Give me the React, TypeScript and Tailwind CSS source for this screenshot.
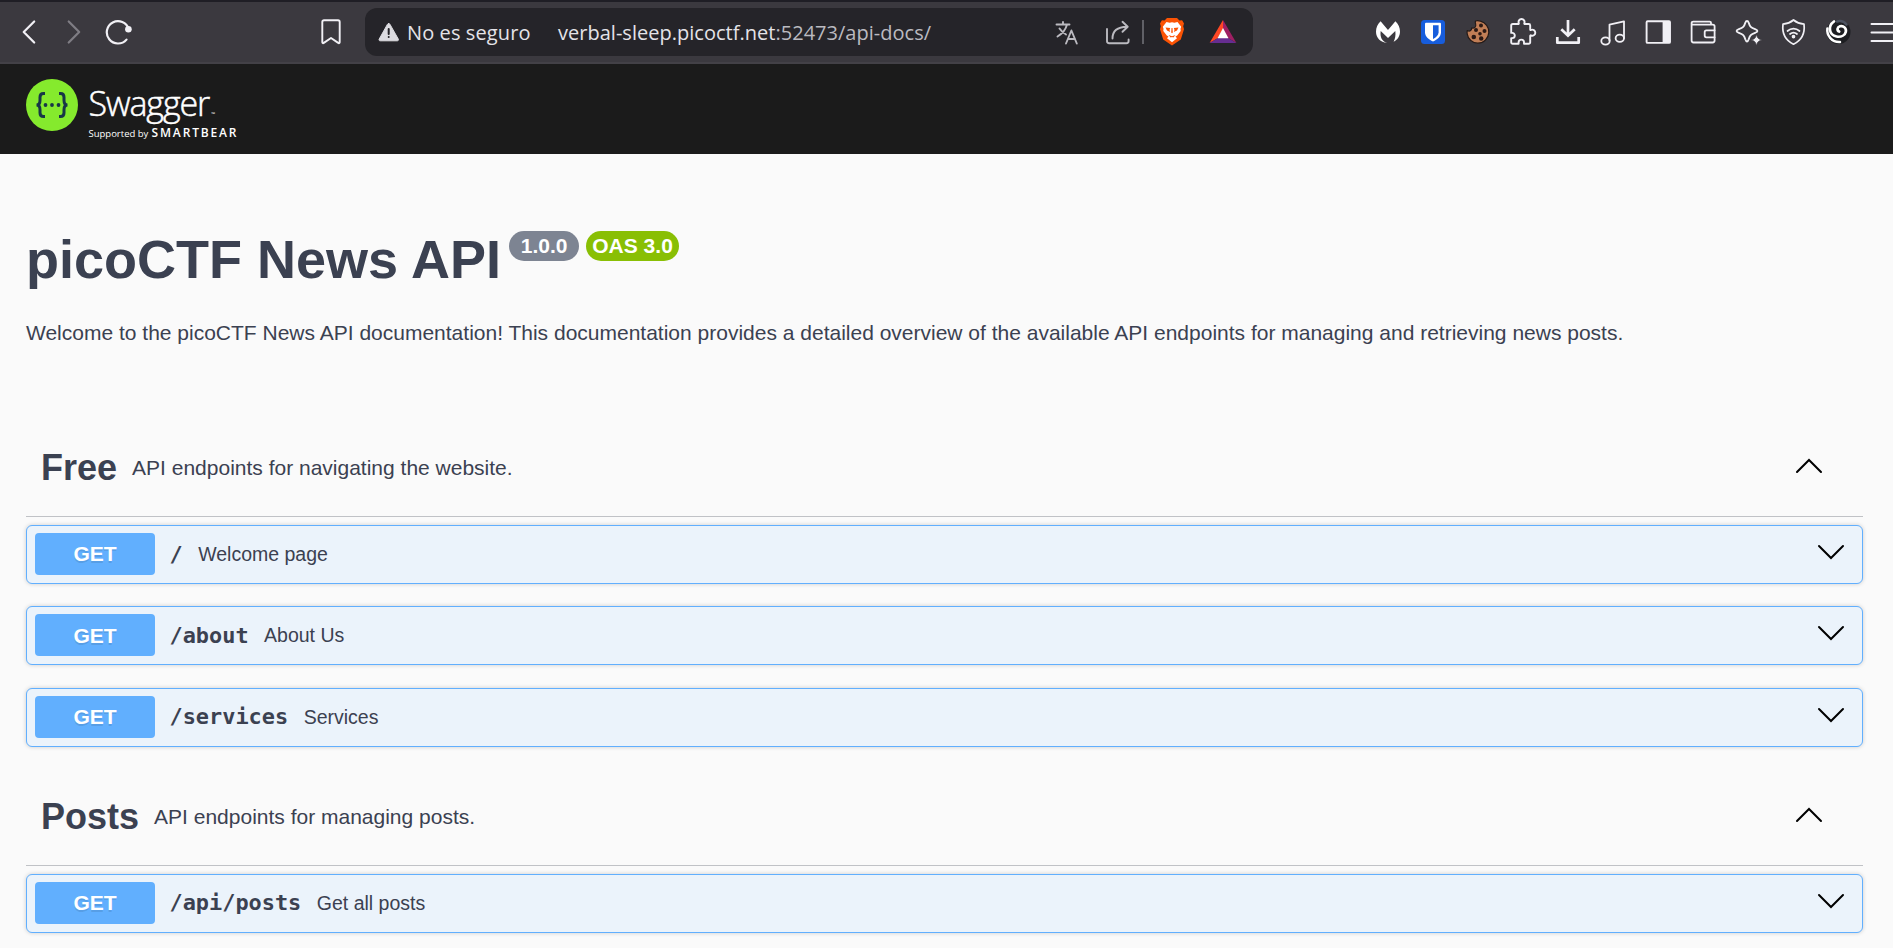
import type { ReactNode } from "react";

type Operation = { path: string; summary: string };
type Section = { name: string; description: string; operations: Operation[] };

const sections: Section[] = [
  {
    name: "Free",
    description: "API endpoints for navigating the website.",
    operations: [
      { path: "/", summary: "Welcome page" },
      { path: "/about", summary: "About Us" },
      { path: "/services", summary: "Services" },
    ],
  },
  {
    name: "Posts",
    description: "API endpoints for managing posts.",
    operations: [{ path: "/api/posts", summary: "Get all posts" }],
  },
];

function Icon({ children, className = "" }: { children: ReactNode; className?: string }) {
  return (
    <svg
      viewBox="0 0 28 28"
      className={`h-7 w-7 shrink-0 ${className}`}
      fill="none"
      stroke="currentColor"
      strokeWidth="1.9"
      strokeLinecap="round"
      strokeLinejoin="round"
    >
      {children}
    </svg>
  );
}

const extensions: { id: string; art: ReactNode }[] = [
  {
    id: "malwarebytes",
    art: (
      <path
        stroke="none"
        fill="#fff"
        d="M6.6 3.2 14 12l7.4-8.8C24.4 6 26 9.6 26 13.6c0 4.600-2.500 8.400-6.400 10.200 1.500-2.800 2.300-6.500 1.700-10.800L14 20l-7.300-7c-.9 6 1.300 10.400 6.300 12C6.500 24.500 2 19.800 2 13.800 2 9.600 3.600 6 6.600 3.200Z"
      />
    ),
  },
  {
    id: "bitwarden",
    art: (
      <g stroke="none">
        <rect x="2" y="2" width="24" height="24" rx="3.500" fill="#175ddc" />
        <path fill="#fff" d="M7 4.700h14a1 1 0 0 1 1 1v8.600c0 4.200-3.500 7.300-8 9.300-4.500-2-8-5.100-8-9.300V5.700a1 1 0 0 1 1-1Z" />
        <path fill="#175ddc" d="M14 7.200h5.600v7c0 2.900-2.400 5.100-5.600 6.700Z" />
      </g>
    ),
  },
  {
    id: "cookie",
    art: (
      <g stroke="none">
        <path
          fill="#c17e56"
          stroke="#241a18"
          strokeWidth="1.200"
          d="M11.500 3c1.500-.4 3.500-.3 5 .2 5 1.400 8.700 5.800 8.300 11.400-.4 6-5 10.600-11 10.600-5.300 0-9.900-4-10.600-9.300-.2-1.300-.2-2.300 0-3.300 3 1.200 4.700-.4 4.300-2.600 3 .5 4.800-1 4.200-3.600-.2-1.200-.8-2-.2-3.400Z"
        />
        <g fill="#2c1a15">
          <circle cx="17" cy="7.600" r="2" />
          <circle cx="12" cy="12" r="2" />
          <circle cx="20.500" cy="13" r="2" />
          <circle cx="16" cy="15.800" r="1.800" />
          <circle cx="9.800" cy="19" r="2.300" />
          <circle cx="17.200" cy="20.500" r="2.200" />
        </g>
      </g>
    ),
  },
  {
    id: "puzzle",
    art: (
      <path d="M4.300 6h5.400c.4 0 .7-.3.600-.8a3 3 0 1 1 5.500 0c-.1.500.2.800.6.800h3.800A1.500 1.500 0 0 1 21.700 7.500v3.900c0 .5.300.7.700.600a3 3 0 1 1 0 5.300c-.4-.1-.7.100-.7.600v6.400a1.500 1.500 0 0 1-1.500 1.500h-4.700v-1.500a2.700 2.700 0 0 0-5.400 0v1.500H4.200a1.500 1.500 0 0 1-1.500-1.500v-4.200h1a2.600 2.600 0 0 0 0-5.200h-1V7.600A1.600 1.600 0 0 1 4.300 6Z" transform="translate(-.5 0)" />
    ),
  },
  {
    id: "download",
    art: (
      <g strokeWidth="2.700" strokeLinejoin="miter" strokeLinecap="butt">
        <path d="M14 2v15M7.300 11.200l6.700 6.500 6.700-6.500" />
        <path d="M3.300 19v5.700h21.400V19" strokeLinejoin="round" />
      </g>
    ),
  },
  {
    id: "music",
    art: (
      <g strokeWidth="1.800">
        <path d="M10.500 22.500V6.700L25 3.300V20" />
        <ellipse cx="6.500" cy="23" rx="4.200" ry="3.600" />
        <ellipse cx="20.800" cy="20.300" rx="4.200" ry="3.600" />
      </g>
    ),
  },
  {
    id: "sidebar",
    art: (
      <g>
        <rect x="2.600" y="3.300" width="23.400" height="21.600" rx="1" />
        <path d="M18.600 3.300H26v21.600h-7.400Z" fill="currentColor" stroke="none" />
      </g>
    ),
  },
  {
    id: "wallet",
    art: (
      <g strokeWidth="1.800">
        <path d="M22 6.600V4.900c0-.8-.5-1.300-1.300-1.300H4.300c-1 0-1.700.6-1.700 1.500v17.500c0 1.100.8 1.900 1.900 1.900h19.200c1.100 0 1.900-.8 1.900-1.900V8.600c0-1.100-.8-1.900-1.900-1.900H4.500c-1 0-1.900-.6-1.900-1.500" />
        <path d="M25.600 12.300h-8.200c-1 0-1.700.7-1.700 1.700v3.600c0 1 .7 1.700 1.700 1.700h8.200" />
      </g>
    ),
  },
  {
    id: "sparkle",
    art: (
      <g>
        <path d="M13 3c.8 0 1.300.6 1.700 1.700 1.200 3.900 2.200 5 6.400 6.400 1.400.5 2.300.9 2.300 1.900s-.9 1.400-2.300 1.900c-4.200 1.400-5.200 2.500-6.400 6.400-.4 1.200-.9 2.200-1.700 2.200s-1.300-1-1.700-2.200c-1.200-3.900-2.200-5-6.400-6.400-1.400-.5-2.300-.9-2.300-1.900s.9-1.400 2.300-1.900c4.200-1.400 5.200-2.500 6.400-6.400C11.700 3.600 12.200 3 13 3Z" />
        <path fill="currentColor" stroke="#3b393f" strokeWidth=".8" d="M22.500 16c.8 4 1.800 5 5.500 6-3.700 1-4.700 2-5.500 6-.8-4-1.800-5-5.500-6 3.700-1 4.700-2 5.500-6Z" />
      </g>
    ),
  },
  {
    id: "vpn",
    art: (
      <g strokeWidth="1.700">
        <path d="M14.500 2c3 2.500 6.500 3.800 10.500 4.200 1 8.600-1.500 15.800-10.500 20C5.500 22 3 14.800 4 6.200 8 5.800 11.500 4.500 14.500 2Z" />
        <path d="M8.500 13c3.500-3.200 8.500-3.200 12 0M11 16c2.200-1.800 4.800-1.800 7 0" />
        <circle cx="14.500" cy="18.600" r="1" fill="currentColor" />
      </g>
    ),
  },
  {
    id: "swirl",
    art: (
      <g>
        <circle cx="14.500" cy="14" r="12" fill="#1d1e22" stroke="none" />
        <path d="M13 3.500c4-1 7.500.3 9.500 3" stroke="#4c5260" strokeWidth="2.500" />
        <path d="M10 3.500C3.500 8 5 17 12.500 18.500c5 .9 8.500-1.500 9.300-4.700.8-3.500-2.300-6.500-5.800-5.500-3 1-3.300 4.300-.8 5.300" stroke="#fff" strokeWidth="2.700" />
        <path d="M3.400 10.500c-1 7 4.600 14 12.600 13.500" stroke="#fff" strokeWidth="2.500" />
      </g>
    ),
  },
  {
    id: "menu",
    art: <path d="M2.500 6H28M2.500 14.500H28M2.500 23H28" strokeWidth="2" />,
  },
];

function BrowserBar() {
  return (
    <div className="flex h-16 shrink-0 items-center overflow-hidden border-t-2 border-b-2 border-t-[#1f1e25] border-b-[#434147] bg-[#3b393f] text-[#f1f0f5]">
      <div className="flex w-[365px] shrink-0 items-center">
        <Icon className="ml-[15px]">
          <path d="M19.200 3.500 8.700 14l10.500 10.500" strokeWidth="2.200" />
        </Icon>
        <Icon className="ml-[17px] text-[#7f7d84]">
          <path d="M8.700 3.500 19.200 14 8.700 24.500" strokeWidth="2.200" />
        </Icon>
        <Icon className="ml-[17px]">
          <path d="M23.700 11A11.200 11.200 0 1 0 21.500 21.600" strokeWidth="2.200" />
          <circle cx="23.400" cy="11.300" r="3.300" fill="currentColor" stroke="none" />
        </Icon>
        <Icon className="ml-[184px]">
          <path d="M7 2.300h14c1 0 1.700.7 1.700 1.700v20.300c0 .9-.8 1.200-1.500.6L14 20l-7.200 4.900c-.7.600-1.500.3-1.500-.6V4c0-1 .7-1.700 1.700-1.700Z" />
        </Icon>
      </div>

      <div className="flex h-12 w-[888px] shrink-0 items-center rounded-xl bg-[#252429] font-['Open_Sans','Noto_Sans',sans-serif] text-[20px] leading-6">
        <Icon className="ml-2.5">
          <path
            d="M13.700 5.500c.6 0 1 .3 1.300.9l8.300 14.700c.5.900 0 1.700-1 1.700H5.200c-1 0-1.500-.8-1-1.700L12.400 6.400c.3-.6.700-.9 1.300-.9Z"
            fill="#dddce1"
            stroke="#dddce1"
            strokeWidth="1"
          />
          <path d="M13.700 11v5M13.700 19v.1" stroke="#252429" strokeWidth="2" />
        </Icon>
        <span className="mt-0.5 ml-1 w-[151px] whitespace-nowrap tracking-[0.100px] text-[#e4e3e8]">No es seguro</span>
        <span className="mt-0.5 whitespace-nowrap tracking-[0.020px] text-[#e4e3e8]">
          verbal-sleep.picoctf.net<span className="text-[#bbbac0]">:52473/api-docs/</span>
        </span>
        <div className="ml-auto flex items-center text-[#bbbac0]">
          <Icon>
            <path d="M3.500 6.500h13M10 4v2.500M14 6.500c-1.200 5-4.500 9-9.500 12M6.500 10.500c2 3 4 4.500 6.500 6M13 25.500l5.400-13 5.400 13M15 21h7" />
          </Icon>
          <Icon className="ml-[23px]">
            <path d="M3 11v12c0 1.400.8 2.200 2.200 2.200h17.200c1.400 0 2.200-.8 2.200-2.200v-1.500M8.500 20.500C8.500 13 13 9 23 8.800M18.500 3.800l5.200 5-5.200 5" />
          </Icon>
          <div className="ml-[10px] h-6 w-0.5 bg-[#606066]" />
          <Icon className="ml-[14px]">
            <g stroke="none">
              <path fill="#fb5304" d="M9 0h10l2.500 2.500 2.600-.3L26 5.500l-.8 2.700.8 3-3.200 10.300L14 27.500 5.200 21.500 2 11.200l.8-3L2 5.500l1.900-3.300 2.600.3Z" />
              <path fill="#fff" d="m8.500 4 3.200.7L14 4.300l2.300.4 3.200-.7 3.700 4.700-.7 2 .2 2.300-3.500 4.500-1.700 1 1.500 1.700-5 4-5-4 1.500-1.700-1.700-1-3.500-4.500.2-2.300-.7-2Z" />
              <path fill="#fb5304" d="m7.500 9.500 4.700.6-.7 1.800.7 2-3.200-1.500Zm13 0-4.700.6.7 1.800-.7 2 3.200-1.500ZM13.500 10h1l.3 4.500-.8.800-.8-.8ZM10.500 17l3.500 1.200 3.500-1.200-2.200 2.500L14 19l-1.300.5Z" />
            </g>
          </Icon>
          <Icon className="ml-[23px] mr-4">
            <g stroke="none">
              <path fill="#ff4724" d="M14 2v8.500L9 20 .6 25Z" />
              <path fill="#9e1f63" d="m14 2 13.400 23L19 20l-5-9.500Z" />
              <path fill="#662d91" d="m.6 25 8.400-5h10l8.400 5Z" />
              <path fill="#fff" d="m14 10 5.500 10.200h-11Z" />
            </g>
          </Icon>
        </div>
      </div>

      <div className="ml-[112.500px] flex shrink-0">
        {extensions.map((item) => (
          <div key={item.id} className="flex w-[45px] shrink-0 justify-center">
            <Icon>{item.art}</Icon>
          </div>
        ))}
      </div>
    </div>
  );
}

function SwaggerHeader() {
  return (
    <header className="flex h-[90px] shrink-0 bg-[#1b1b1b] pt-[15px] pl-[26px] font-['Open_Sans',sans-serif] text-white">
      <svg viewBox="0 0 52 52" className="h-[52px] w-[52px] shrink-0" fill="none">
        <circle cx="26" cy="26" r="26" fill="#85ea2d" />
        <g stroke="#173647" strokeWidth="3">
          <path d="M19 14.500h-1.500c-2.500 0-3.500 1.300-3.500 3.800v3c0 2.600-1 4.700-3.500 4.700 2.500 0 3.500 2.100 3.500 4.700v3c0 2.500 1 3.800 3.500 3.800H19" />
          <path d="M33 14.500h1.500c2.500 0 3.500 1.300 3.500 3.800v3c0 2.600 1 4.700 3.500 4.700-2.500 0-3.500 2.100-3.500 4.700v3c0 2.500-1 3.800-3.500 3.800H33" />
        </g>
        <g fill="#173647">
          <circle cx="19.500" cy="26" r="1.900" />
          <circle cx="26" cy="26" r="1.900" />
          <circle cx="32.500" cy="26" r="1.900" />
        </g>
      </svg>
      <div className="ml-[10.500px] flex flex-col">
        <div className="flex h-12 items-end">
          <span className="text-[34px] leading-[48px] font-light tracking-[-1.100px] [-webkit-text-stroke:0.500px_#fff]">Swagger</span>
          <span className="mb-2 ml-0.5 text-[5px] leading-[10px]">™</span>
        </div>
        <div className="flex items-baseline whitespace-nowrap leading-3">
          <span className="w-[63px] text-[9.500px]">Supported by</span>
          <span className="text-[12px] font-semibold tracking-[1.850px]">SMARTBEAR</span>
        </div>
      </div>
    </header>
  );
}

function Chevron({ up = false }: { up?: boolean }) {
  return (
    <svg viewBox="0 0 30 30" className="h-[30px] w-[30px]" fill="none" stroke="#000" strokeWidth="2" strokeLinecap="round">
      <path d={up ? "M3 21 15 9l12 12" : "M3 9l12 12L27 9"} />
    </svg>
  );
}

function OperationRow({ path, summary }: Operation) {
  return (
    <div className="flex h-[59px] items-center rounded-md border border-[#61affe] bg-[#ebf3fb] pr-4 pl-2 shadow-[0_0_4px_rgba(0,0,0,0.190)]">
      <div className="mb-px flex h-[42px] w-[120px] items-center justify-center rounded bg-[#61affe] text-[21px] font-bold text-white [text-shadow:0_1.500px_0_rgba(0,0,0,0.100)]">
        GET
      </div>
      <span className="ml-[14.500px] font-['DejaVu_Sans_Mono',monospace] text-[21.900px] leading-7 font-bold">{path}</span>
      <span className="mb-px ml-[15.500px] text-[19.500px] leading-7">{summary}</span>
      <span className="mb-[5px] ml-auto">
        <Chevron />
      </span>
    </div>
  );
}

export default function App() {
  return (
    <div className="flex h-[948px] w-full flex-col overflow-hidden bg-[#fafafa] font-['Liberation_Sans',Arial,sans-serif] text-[#3b4151]">
      <BrowserBar />
      <SwaggerHeader />
      <main className="pr-[30px] pl-[26px]">
        <div className="flex items-start pt-[73px]">
          <h1 className="text-[54px] leading-[64px] font-bold">picoCTF News API</h1>
          <span className="mt-1 ml-[8px] flex h-[30px] w-[70px] items-center justify-center rounded-full bg-[#7d8492] text-[21px] font-bold text-white">
            1.0.0
          </span>
          <span className="mt-1 ml-[7px] flex h-[30px] w-[93px] items-center justify-center rounded-full bg-[#89bf04] text-[21px] font-bold whitespace-nowrap text-white">
            OAS 3.0
          </span>
        </div>
        <p className="mt-[28px] text-[21px] leading-7">
          Welcome to the picoCTF News API documentation! This documentation provides a detailed overview of the available
          API endpoints for managing and retrieving news posts.
        </p>
        <div className="mt-[71px]">
          {sections.map((section) => (
            <section key={section.name} className="mb-5">
              <div className="flex h-[99px] items-center border-b border-[rgba(59,65,81,0.300)] pr-[39px] pl-[15px]">
                <h2 className="mt-0.5 text-[36px] leading-[42px] font-bold">{section.name}</h2>
                <p className="mt-0.5 ml-[15px] text-[21px] leading-7">{section.description}</p>
                <span className="mb-0.5 ml-auto">
                  <Chevron up />
                </span>
              </div>
              <div className="mt-2 flex flex-col gap-[22.300px]">
                {section.operations.map((operation) => (
                  <OperationRow key={operation.path} {...operation} />
                ))}
              </div>
            </section>
          ))}
        </div>
      </main>
    </div>
  );
}
